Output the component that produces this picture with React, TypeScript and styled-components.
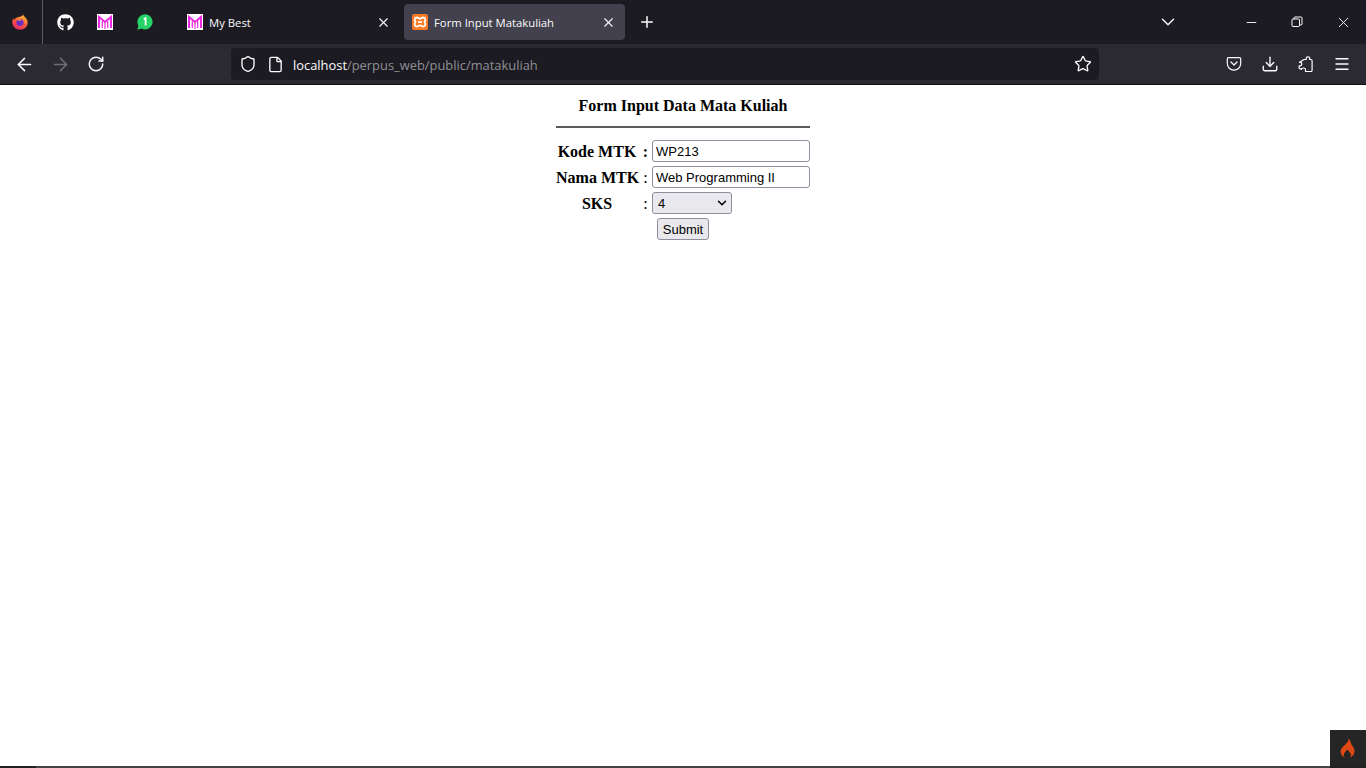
import { createGlobalStyle } from 'styled-components'
import styled from 'styled-components'
import { FaGithub } from 'react-icons/fa'
import { ArrowLeft, ArrowRight, ChevronDown, Download, File, Menu, Minus, Plus, RotateCw, Shield, Star, X } from 'lucide-react'

const GlobalStyle = createGlobalStyle`
  html, body { margin: 0; padding: 0; height: 100%; background: #fff; }
  #root { height: 100%; }
`

const Screen = styled.div`
  position: relative;
  width: 1366px;
  height: 768px;
  overflow: hidden;
  display: flex;
  flex-direction: column;
  font-family: "Open Sans", "Noto Sans", sans-serif;
`

const TabStrip = styled.div`
  height: 44px;
  flex: none;
  display: flex;
  align-items: center;
  background: #1c1b22;
  color: #fbfbfe;
`

const AppButton = styled.div`
  width: 43px;
  height: 44px;
  flex: none;
  box-sizing: border-box;
  border-right: 1px solid #5b5b61;
  display: flex;
  align-items: center;
  justify-content: center;
  padding-right: 3px;
`

const PinnedTab = styled.div`
  width: 40px;
  height: 44px;
  flex: none;
  display: flex;
  align-items: center;
  justify-content: center;
`

const PinnedGroup = styled.div`
  display: flex;
  padding-left: 2px;
  margin-right: 14px;
`

const Tab = styled.div<{ $active?: boolean }>`
  width: 221px;
  height: 36px;
  flex: none;
  box-sizing: border-box;
  margin-right: 4px;
  padding: 0 9px 0 8px;
  border-radius: 4px;
  display: flex;
  align-items: center;
  gap: 6px;
  font-size: 11.3px;
  background: ${p => (p.$active ? '#42414d' : 'transparent')};
`

const TabTitle = styled.span`
  flex: 1;
  white-space: nowrap;
`

const NewTab = styled.div`
  width: 36px;
  height: 36px;
  flex: none;
  display: flex;
  align-items: center;
  justify-content: center;
`

const StripSpacer = styled.div`
  flex: 1;
`

const ListTabs = styled.div`
  width: 34px;
  display: flex;
  justify-content: center;
  margin-right: 43px;
`

const WindowButton = styled.div`
  width: 46px;
  height: 44px;
  flex: none;
  display: flex;
  align-items: center;
  justify-content: center;
`

const NavBar = styled.div`
  height: 40px;
  flex: none;
  display: flex;
  align-items: center;
  background: #2b2a33;
  color: #fbfbfe;
  border-bottom: 1px solid #0c0c0d;
`

const NavButtons = styled.div`
  width: 231px;
  flex: none;
  box-sizing: border-box;
  padding-left: 6px;
  display: flex;
`

const NavButton = styled.div<{ $dim?: boolean }>`
  width: 36px;
  height: 32px;
  display: flex;
  align-items: center;
  justify-content: center;
  color: ${p => (p.$dim ? '#6f6e75' : '#fbfbfe')};
`

const UrlBar = styled.div`
  width: 868px;
  height: 32px;
  flex: none;
  box-sizing: border-box;
  padding: 0 7px 0 8px;
  background: #1c1b22;
  border-radius: 4px;
  display: flex;
  align-items: center;
  font-size: 12.9px;
`

const UrlIcons = styled.div`
  display: flex;
  align-items: center;
  gap: 10px;
  margin-right: 9px;
`

const UrlText = styled.div`
  flex: 1;
  padding-top: 1px;
  white-space: nowrap;
  color: #8f8f93;
`

const UrlHost = styled.span`
  color: #fbfbfe;
`

const NavRight = styled.div`
  margin-left: 117px;
  display: flex;
`

const Content = styled.main`
  flex: 1;
  background: #fff;
  display: flex;
  justify-content: center;
  font-family: "Liberation Serif", "Times New Roman", serif;
  color: #000;
`

const FormBox = styled.form`
  width: 254px;
  padding-top: 12px;
`

const Title = styled.h4`
  margin: 0;
  font-size: 16px;
  line-height: 18px;
  font-weight: 700;
  text-align: center;
`

const Rule = styled.hr`
  height: 2px;
  margin: 11px 0 12px;
  border: none;
  background: #5a5a5a;
`

const Fields = styled.div`
  display: grid;
  grid-template-columns: 84px 12px 158px;
  row-gap: 4px;
  align-items: center;
`

const FieldLabel = styled.label`
  padding: 2px 2px 0 0;
  font-size: 16px;
  font-weight: 700;
  text-align: center;
  white-space: nowrap;
`

const Colon = styled.span<{ $bold?: boolean }>`
  padding: 2px 1px 0 0;
  font-size: 16px;
  font-weight: ${p => (p.$bold ? 700 : 400)};
  text-align: center;
`

const TextInput = styled.input`
  width: 158px;
  height: 22px;
  box-sizing: border-box;
  margin: 0;
  padding: 1px 3px;
  border: 1px solid #8f8f9d;
  border-radius: 3px;
  background: #fff;
  color: #000;
  font: 13px "Liberation Sans", Arial, sans-serif;
  outline: none;
`

const SelectWrap = styled.div`
  position: relative;
  width: 80px;
  height: 22px;
`

const SksSelect = styled.select`
  appearance: none;
  display: block;
  width: 80px;
  height: 22px;
  box-sizing: border-box;
  margin: 0;
  padding: 0 0 0 5px;
  border: 1px solid #8f8f9d;
  border-radius: 3px;
  background: #e9e9ed;
  color: #000;
  font: 13px "Liberation Sans", Arial, sans-serif;
`

const SelectArrow = styled(ChevronDown)`
  position: absolute;
  right: 3px;
  top: 4px;
  pointer-events: none;
`

const SubmitButton = styled.button`
  grid-column: 1 / -1;
  justify-self: center;
  width: 52px;
  height: 22px;
  box-sizing: border-box;
  margin: 0;
  padding: 0;
  border: 1px solid #8f8f9d;
  border-radius: 3px;
  background: #e9e9ed;
  color: #000;
  font: 13px "Liberation Sans", Arial, sans-serif;
`

const ScreenEdge = styled.div`
  height: 2px;
  flex: none;
  background: linear-gradient(to right, #222 36px, #444 36px, #444 1330px, #222 1330px);
`

const DebugToggle = styled.div`
  position: absolute;
  right: 0;
  bottom: 2px;
  width: 36px;
  height: 36px;
  background: #252525;
  display: flex;
  align-items: center;
  justify-content: center;
`

const FirefoxLogo = () => (
  <svg width="16" height="16" viewBox="0 0 16 16">
    <defs>
      <linearGradient id="fx" x1="0.7" y1="0" x2="0.2" y2="1">
        <stop offset="0" stopColor="#ffbd30" />
        <stop offset="0.5" stopColor="#ff5a3c" />
        <stop offset="1" stopColor="#e3246f" />
      </linearGradient>
    </defs>
    <path d="M11 0.3c.3 1.5 1.2 2 2.2 3 1.500 1.500 2.500 3.200 2.500 5.200 0 4.200-3.400 7.200-7.700 7.200S.3 12.500.3 8.500c0-1.800.5-3.300 1.400-4.300.1.800.4 1.300.8 1.600C3.200 4 4.700 3.600 6 3.200 8.500 2.900 10.700 2.300 11 .3z" fill="url(#fx)" />
    <circle cx="8" cy="8.500" r="3.600" fill="#6a2fc0" />
    <path d="M4.700 5.800C6.500 4.800 9 5 10.500 6.300 9 6 8 6.300 7.500 7z" fill="#ff9d3c" />
  </svg>
)

const MakaraLogo = () => (
  <svg width="16" height="16" viewBox="0 0 16 16">
    <rect width="16" height="16" fill="#fff" />
    <path d="M2 14V3l6 5 6-5v11" fill="none" stroke="#ea2be0" strokeWidth="2" />
    <path d="M5.300 14V7M8 15V8.500M10.700 14V7" fill="none" stroke="#ea2be0" strokeWidth="1.200" />
  </svg>
)

const WhatsAppBadge = () => (
  <svg width="16" height="16" viewBox="0 0 16 16">
    <path d="M.3 15.700l1.100-4A7.600 7.600 0 1 1 4.400 14.600z" fill="#25d366" />
    <path d="M6.700 5.300L8.600 4.200V11.500" fill="none" stroke="#fff" strokeWidth="1.700" />
  </svg>
)

const XamppLogo = () => (
  <svg width="16" height="16" viewBox="0 0 16 16">
    <rect width="16" height="16" rx="2" fill="#fb7a24" />
    <path d="M5 3.500c-2.500 0-3 2.500-1.500 4.500C2 10 2.500 12.500 5 12.500c1.300 0 2-1.200 3-1.200s1.700 1.200 3 1.200c2.500 0 3-2.500 1.500-4.500C14 6 13.500 3.500 11 3.500c-1.300 0-2 1.200-3 1.200S6.300 3.500 5 3.500z" fill="none" stroke="#fff" strokeWidth="1.800" />
    <path d="M6 8h4" stroke="#fff" strokeWidth="1.800" />
  </svg>
)

const PocketIcon = () => (
  <svg width="16" height="16" viewBox="0 0 16 16" fill="none" stroke="currentColor" strokeWidth="1.200">
    <path d="M2.500 1.700h11c.7 0 1.200.5 1.200 1.200v4.600a6.700 6.700 0 0 1-13.400 0V2.900c0-.7.500-1.200 1.200-1.200z" />
    <path d="M5 6l3 3 3-3" strokeLinecap="round" strokeLinejoin="round" />
  </svg>
)

const ExtensionIcon = () => (
  <svg width="16" height="16" viewBox="0 0 16 16" fill="none" stroke="currentColor" strokeWidth="1.200" strokeLinejoin="round">
    <path d="M6 3.500h2.200V2.300c0-2 3.500-2 3.500 0v1.200h1.200c.7 0 1.200.5 1.200 1.200v9.600c0 .7-.5 1.200-1.200 1.200H7.500v-2c0-2-4-2-4 0v-.6H2.300c-.7 0-1.200-.5-1.200-1.200V9.800h1.200c2 0 2-3.500 0-3.500H1.500L6 3.500z" />
  </svg>
)

const RestoreIcon = () => (
  <svg width="12" height="12" viewBox="0 0 12 12" fill="none" stroke="currentColor" strokeWidth="1">
    <rect x="1" y="3" width="7.500" height="7.500" rx="1" />
    <path d="M3 3V2c0-.6.400-1 1-1h6c.6 0 1 .4 1 1v6c0 .6-.4 1-1 1H8.500" />
  </svg>
)

const FlameIcon = () => (
  <svg width="16" height="20" viewBox="0 0 16 20">
    <path d="M8.500 0c.7 3-1.500 4.700-3.500 6.700C3 8.700.5 10.500.5 13.500c0 3 2.200 5.300 4.700 6.200-1.500-1.500-2-3-1-4.500.7-1.200 2-1.700 2.800-3.700 1.500 1.200 2.300 2.200 3.500 3.700 1 1.500.5 3-1 4.500 2.700-.9 5-3.200 5-6.200 0-3.500-1.700-5-3-7C10.800 4.500 10 2 8.500 0z" fill="#dd4814" />
  </svg>
)

export default function App() {
  return (
    <>
      <GlobalStyle />
      <Screen>
        <TabStrip>
          <AppButton><FirefoxLogo /></AppButton>
          <PinnedGroup>
            <PinnedTab><FaGithub size={17} color="#fff" /></PinnedTab>
            <PinnedTab><MakaraLogo /></PinnedTab>
            <PinnedTab><WhatsAppBadge /></PinnedTab>
          </PinnedGroup>
          <Tab>
            <MakaraLogo />
            <TabTitle>My Best</TabTitle>
            <X size={15} strokeWidth={1.7} />
          </Tab>
          <Tab $active>
            <XamppLogo />
            <TabTitle>Form Input Matakuliah</TabTitle>
            <X size={15} strokeWidth={1.7} />
          </Tab>
          <NewTab><Plus size={18} strokeWidth={2} /></NewTab>
          <StripSpacer />
          <ListTabs><ChevronDown size={22} strokeWidth={1.5} /></ListTabs>
          <WindowButton><Minus size={15} strokeWidth={1.5} /></WindowButton>
          <WindowButton><RestoreIcon /></WindowButton>
          <WindowButton><X size={17} strokeWidth={1.3} /></WindowButton>
        </TabStrip>
        <NavBar>
          <NavButtons>
            <NavButton><ArrowLeft size={21} strokeWidth={1.7} /></NavButton>
            <NavButton $dim><ArrowRight size={21} strokeWidth={1.7} /></NavButton>
            <NavButton><RotateCw size={18} strokeWidth={1.9} /></NavButton>
          </NavButtons>
          <UrlBar>
            <UrlIcons>
              <Shield size={18} strokeWidth={1.8} color="#fbfbfe" />
              <File size={17} strokeWidth={1.9} color="#fbfbfe" />
            </UrlIcons>
            <UrlText><UrlHost>localhost</UrlHost>/perpus_web/public/matakuliah</UrlText>
            <Star size={18} strokeWidth={1.8} color="#fbfbfe" />
          </UrlBar>
          <NavRight>
            <NavButton><PocketIcon /></NavButton>
            <NavButton><Download size={18} strokeWidth={1.8} /></NavButton>
            <NavButton><ExtensionIcon /></NavButton>
            <NavButton><Menu size={18} strokeWidth={1.8} /></NavButton>
          </NavRight>
        </NavBar>
        <Content>
          <FormBox onSubmit={e => e.preventDefault()}>
            <Title>Form Input Data Mata Kuliah</Title>
            <Rule />
            <Fields>
              <FieldLabel>Kode MTK</FieldLabel>
              <Colon $bold>:</Colon>
              <TextInput defaultValue="WP213" />
              <FieldLabel>Nama MTK</FieldLabel>
              <Colon>:</Colon>
              <TextInput defaultValue="Web Programming II" />
              <FieldLabel>SKS</FieldLabel>
              <Colon>:</Colon>
              <SelectWrap>
                <SksSelect defaultValue="4">
                  <option>2</option>
                  <option>3</option>
                  <option>4</option>
                </SksSelect>
                <SelectArrow size={14} strokeWidth={2.6} color="#000" />
              </SelectWrap>
              <SubmitButton type="submit">Submit</SubmitButton>
            </Fields>
          </FormBox>
        </Content>
        <ScreenEdge />
        <DebugToggle><FlameIcon /></DebugToggle>
      </Screen>
    </>
  )
}
